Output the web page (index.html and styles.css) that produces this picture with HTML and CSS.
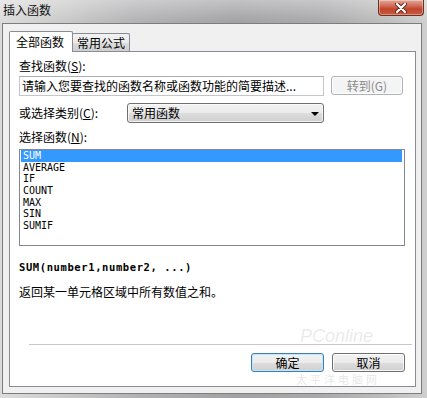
FILE: index.html
```html
<!DOCTYPE html>
<html lang="zh-CN">
<head>
<meta charset="utf-8">
<title>插入函数</title>
<link rel="stylesheet" href="styles.css">
</head>
<body>
<div class="window">
  <div class="titlebar">
    <span class="title">插入函数</span>
    <div class="close-btn">
      <svg width="16" height="10" viewBox="0 0 16 10">
        <path d="M4 1 L12 9 M12 1 L4 9" stroke="#5a2a22" stroke-width="4" stroke-linecap="round"/>
        <path d="M4 1 L12 9 M12 1 L4 9" stroke="#ffffff" stroke-width="2.2" stroke-linecap="round"/>
      </svg>
    </div>
  </div>
  <div class="client">
    <div class="tabs">
      <div class="tab tab-active">全部函数</div>
      <div class="tab">常用公式</div>
    </div>
    <div class="panel">
      <div class="label">查找函数(<u>S</u>):</div>
      <div class="search-row">
        <div class="textbox">请输入您要查找的函数名称或函数功能的简要描述...</div>
        <div class="btn btn-disabled">转到(G)</div>
      </div>
      <div class="category-row">
        <div class="label category-label">或选择类别(<u>C</u>):</div>
        <div class="select">
          <span>常用函数</span>
          <span class="arrow"></span>
        </div>
      </div>
      <div class="label label-gap">选择函数(<u>N</u>):</div>
      <div class="listbox">
        <div class="item item-selected">SUM</div>
        <div class="item">AVERAGE</div>
        <div class="item">IF</div>
        <div class="item">COUNT</div>
        <div class="item">MAX</div>
        <div class="item">SIN</div>
        <div class="item">SUMIF</div>
      </div>
      <div class="syntax">SUM(number1,number2, ...)</div>
      <div class="desc">返回某一单元格区域中所有数值之和。</div>
      <div class="separator"></div>
      <div class="button-row">
        <div class="btn btn-default">确定</div>
        <div class="btn">取消</div>
      </div>
      <div class="wm-top">PConline</div>
      <div class="wm-sub">太平洋电脑网</div>
    </div>
  </div>
</div>
</body>
</html>
```

FILE: styles.css
```css
* { box-sizing: border-box; }
html, body { margin: 0; padding: 0; }
body {
  width: 427px;
  height: 398px;
  overflow: hidden;
  font-family: "Noto Sans CJK SC", "Noto Sans", sans-serif;
  font-size: 12px;
  color: #000;
}
.window {
  width: 427px;
  height: 398px;
  background:
    linear-gradient(180deg, rgba(255,255,255,0.35) 0px, rgba(255,255,255,0) 22px),
    linear-gradient(90deg, #dcdcdc 0%, #cdcdcd 12%, #b2b2b4 32%, #a2a2a6 55%, #a9a9ac 75%, #bdbdbd 90%, #cfcfcf 100%);
  display: flex;
  flex-direction: column;
}
.titlebar {
  height: 23px;
  display: flex;
  justify-content: space-between;
  align-items: flex-start;
  padding-left: 3px;
  padding-right: 3px;
}
.title {
  line-height: 20px;
  font-size: 12px;
  color: #111;
}
.close-btn {
  width: 46px;
  height: 16px;
  border: 1px solid #6e2f25;
  border-top: none;
  border-radius: 0 0 4px 4px;
  background: linear-gradient(180deg, #e3a899 0%, #d06a55 40%, #c0452c 60%, #c65a3e 100%);
  display: flex;
  align-items: center;
  justify-content: center;
  box-shadow: inset 0 0 0 1px rgba(255,255,255,0.35);
}
.close-btn svg { display: block; }
.client {
  margin: 0 5px 0 2px;
  height: 371px;
  border: 1px solid #7d7d7d;
  background: #f0f0f0;
  padding: 7px 5px 6px 6px;
  display: flex;
  flex-direction: column;
}
.tabs {
  display: flex;
  align-items: flex-end;
  height: 20px;
}
.tab {
  height: 18px;
  border: 1px solid #898c95;
  border-bottom: none;
  padding: 0 4px;
  margin-left: -1px;
  line-height: 18px;
  background: linear-gradient(180deg, #f2f2f2 0%, #ebebeb 50%, #dddddd 51%, #cfcfcf 100%);
  border-radius: 2px 2px 0 0;
}
.tab-active {
  position: relative;
  z-index: 1;
  margin-left: 0;
  height: 21px;
  margin-bottom: -1px;
  width: 64px;
  padding: 0 0 0 6px;
  line-height: 20px;
  background: #fff;
}
.panel {
  position: relative;
  flex: 1;
  background: #fff;
  border: 1px solid #898c95;
  padding: 7px 10px 0 9px;
  display: flex;
  flex-direction: column;
}
.label {
  line-height: 14px;
  height: 14px;
  white-space: nowrap;
}
.label u { text-decoration: underline; text-underline-offset: 1px; }
.search-row {
  margin-top: 3px;
  display: flex;
  align-items: flex-start;
  justify-content: space-between;
}
.textbox {
  width: 305px;
  height: 20px;
  border: 1px solid #c4c6cb;
  border-top-color: #abadb3;
  padding-left: 2px;
  line-height: 18px;
  white-space: nowrap;
  overflow: hidden;
}
.btn {
  width: 73px;
  height: 19px;
  border: 1px solid #707070;
  border-radius: 3px;
  background: linear-gradient(180deg, #f2f2f2 0%, #ebebeb 50%, #dddddd 51%, #cfcfcf 100%);
  box-shadow: inset 0 0 0 1px rgba(255,255,255,0.8);
  text-align: center;
  line-height: 17px;
}
.btn-disabled {
  width: 72px;
  margin-right: 2px;
  border-color: #adb2b5;
  background: #f4f4f4;
  color: #8a8a8a;
}
.category-row {
  margin-top: 7px;
  height: 20px;
  display: flex;
  align-items: center;
}
.category-label { width: 108px; }
.select {
  width: 197px;
  height: 20px;
  border: 1px solid #707070;
  border-radius: 3px;
  background: linear-gradient(180deg, #f2f2f2 0%, #ebebeb 50%, #dddddd 51%, #cfcfcf 100%);
  box-shadow: inset 0 0 0 1px rgba(255,255,255,0.7);
  display: flex;
  align-items: center;
  justify-content: space-between;
  padding: 0 4px 0 4px;
  line-height: 18px;
}
.arrow {
  width: 0;
  height: 0;
  border-left: 4px solid transparent;
  border-right: 4px solid transparent;
  border-top: 4px solid #000;
  margin-top: 1px;
}
.label-gap { margin-top: 7px; }
.listbox {
  margin-top: 5px;
  width: 386px;
  height: 97px;
  border: 1px solid #828790;
  padding: 0 1px;
  font-family: "DejaVu Sans Mono", "Liberation Mono", monospace;
  font-size: 10px;
}
.item {
  height: 11.67px;
  line-height: 11.67px;
  padding-left: 2px;
  white-space: nowrap;
}
.item-selected {
  background: #3399ff;
  color: #fff;
  margin-right: 1px;
}
.syntax {
  margin-top: 14px;
  height: 14px;
  line-height: 14px;
  font-family: "DejaVu Sans Mono", "Liberation Mono", monospace;
  font-weight: bold;
  font-size: 10.5px;
  letter-spacing: 0.6px;
  white-space: nowrap;
}
.desc {
  margin-top: 11px;
  height: 14px;
  line-height: 14px;
  white-space: nowrap;
}
.separator {
  margin-top: 45px;
  margin-left: 10px;
  margin-right: -7px;
  height: 1px;
  background: #c8c8c8;
}
.button-row {
  margin-top: 8px;
  display: flex;
  justify-content: flex-end;
  gap: 8px;
}
.btn-default {
  border-color: #3c7fb1;
  box-shadow: inset 0 0 0 1px #bfe7fb;
}
.wm-top {
  position: absolute;
  left: 290px;
  top: 275px;
  font-family: "Liberation Sans", sans-serif;
  font-size: 18px;
  font-style: italic;
  line-height: 18px;
  color: rgba(170, 170, 170, 0.25);
  pointer-events: none;
}
.wm-sub {
  position: absolute;
  left: 286px;
  top: 321px;
  font-size: 11px;
  line-height: 13px;
  letter-spacing: 3px;
  color: rgba(170, 170, 170, 0.3);
  pointer-events: none;
}
```
